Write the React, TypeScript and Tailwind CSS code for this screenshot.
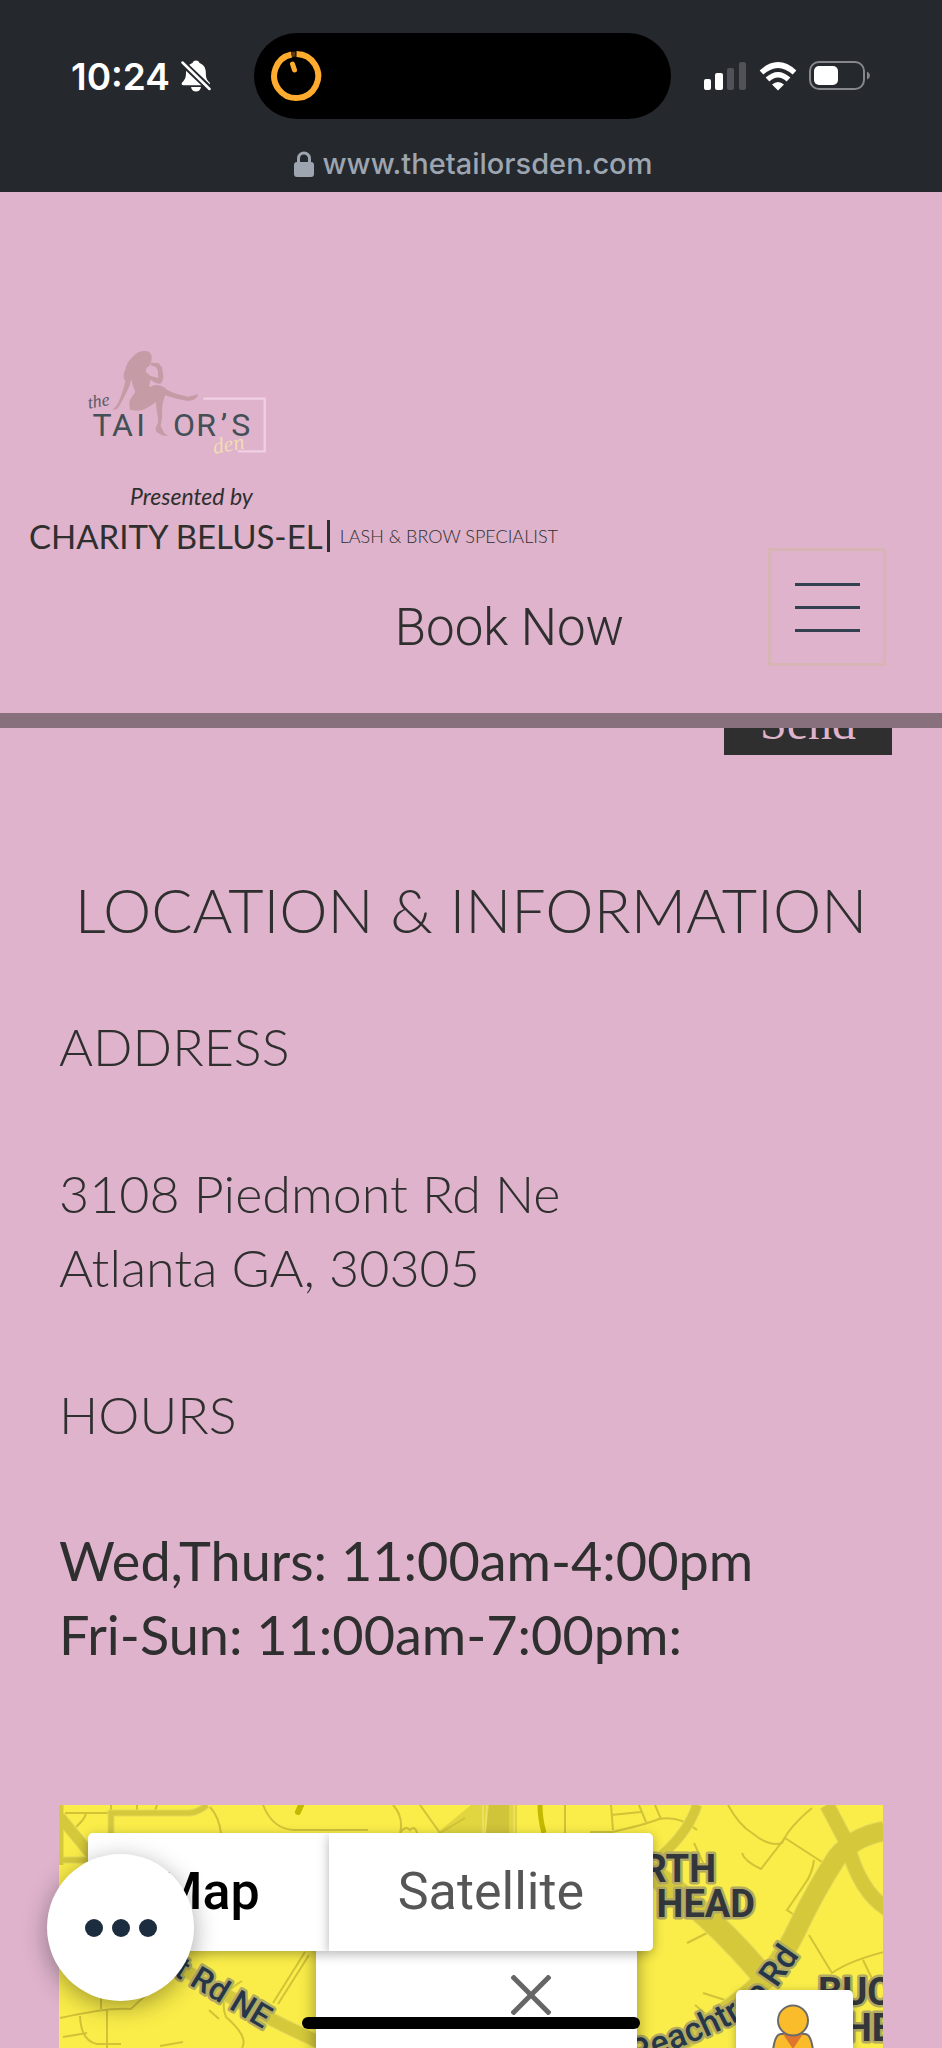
import type { ReactNode } from "react";

const ROADS_THIN = [
  "M6 8H52M27 8Q26 14 17 22M78 0V8M98 0L96 6M52 0V8",
  "M151 2Q160 12 162 28",
  "M204 0Q214 25 236 25H309",
  "M334 0Q345 12 341 28M341 28Q346 20 351 25Q356 20 358 28",
  "M361 0L381 28L406 13",
  "M506 0V28M552 0L554 25M552 10L582 7M580 0L587 17M596 0L602 14",
  "M531 27H553Q585 20 600 14Q620 10 638 25",
  "M669 0Q680 20 693 28Q710 42 723 38Q730 22 753 3",
  "M683 48Q685 56 702 64L726 33L763 57",
  "M755 55Q753 70 745 80L728 105L738 112",
  "M750 130L773 168Q790 156 825 147M804 155L816 180",
  "M628 138L650 127M635 38L645 60",
  "M214 198L246 147M219 199L250 150",
  "M183 176Q158 190 167 212Q190 232 183 243",
  "M1 213Q50 202 72 204Q86 190 98 182M21 211Q22 236 38 239H62M48 204V243M42 190V204",
  "M4 232L28 228M101 241L124 237M150 205L160 214",
  "M636 200L648 210L644 230M644 188L666 195",
];

const ROADS_WIDE: { d: string; width: number }[] = [
  { d: "M2 0V60", width: 4 },
  { d: "M52 28V8H130Q140 7 148 0", width: 5 },
  { d: "M1 12L34 52", width: 10 },
  { d: "M1 55H34", width: 5 },
  { d: "M638 0Q630 26 603 50", width: 9 },
  { d: "M121 162Q190 206 262 238", width: 12 },
  { d: "M580 60Q650 104 713 182", width: 22 },
  { d: "M825 26Q794 32 778 52Q756 86 740 120Q720 164 686 192Q650 220 600 250", width: 19 },
  { d: "M768 0L788 38Q800 86 828 104", width: 14 },
];

function StatusBar() {
  return (
    <div className="grid grid-cols-[1fr_417px_1fr] items-center pr-[17px] pt-[33px] font-[Inter,sans-serif] text-white">
      <div className="flex items-center gap-[11px] pl-[71px]">
        <span className="text-[37px] leading-none font-semibold">10:24</span>
        <svg viewBox="0 0 30 32" className="h-8 w-[30px]" aria-label="Silent mode">
          <path
            fill="#fff"
            d="M15 .5a4 4 0 0 1 3.600 2.400c4 1.500 6.200 5 6.200 9.300 0 6 1.200 7.800 3.500 10 1.300 1.500.700 3-.800 3H2.500c-1.800 0-2.500-1.600-1.200-3 2.400-2.400 3.700-4 3.700-10 0-4.300 2.300-7.800 6.400-9.300A4 4 0 0 1 15 .5zM10 27h10c-.5 3-2.500 4.500-5 4.500S10.500 30 10 27z"
          />
          <path d="M-1 .5L31 31" stroke="#25282d" strokeWidth="6.500" />
          <path d="M1.500 2.500L28.500 29" stroke="#fff" strokeWidth="2.500" strokeLinecap="round" />
        </svg>
      </div>
      <div className="flex h-[86px] items-center rounded-full bg-black pl-[16px]">
        <svg viewBox="0 0 52 52" className="size-[52px]" fill="none" stroke="#ffab2e" aria-label="Timer">
          <path d="M21.500 4.500A22 22 0 1 0 26.500 4" strokeWidth="6" />
          <path d="M25.500 4A22 22 0 0 0 21.500 4.500" stroke="#5a3b12" strokeWidth="5" />
          <path d="M22.500 14L24.500 20" strokeWidth="5" strokeLinecap="round" />
        </svg>
      </div>
      <div className="flex items-center pl-[33px]">
        <svg viewBox="0 0 42 28" className="h-7 w-[42px]" fill="#fff" aria-label="Signal">
          <rect x="0" y="17" width="7" height="11" rx="2" />
          <rect x="11" y="11" width="8" height="17" rx="2" />
          <rect x="23" y="6" width="7" height="22" rx="2" fill="#505257" />
          <rect x="35" y="0" width="7" height="28" rx="2" fill="#505257" />
        </svg>
        <svg viewBox="0 0 38 29" className="ml-[13px] h-[29px] w-[38px]" fill="none" stroke="#fff" aria-label="Wi-Fi">
          <path d="M2.500 10.500Q19-4.500 35.500 10.500" strokeWidth="5.500" />
          <path d="M8.500 17.500Q19 8 29.500 17.500" strokeWidth="5.500" />
          <path d="M13 22.500Q19 17.500 25 22.500L19 28.500z" fill="#fff" stroke="none" />
        </svg>
        <svg viewBox="0 0 62 30" className="ml-[12px] h-[30px] w-[62px]" aria-label="Battery">
          <rect x="1" y="1" width="54" height="27" rx="9" fill="none" stroke="#85878a" strokeWidth="2" />
          <rect x="5" y="5" width="24" height="19" rx="5" fill="#fff" />
          <path d="M58 10.500q3 1.500 3 4t-3 4z" fill="#85878a" />
        </svg>
      </div>
    </div>
  );
}

function Logo() {
  return (
    <svg viewBox="0 0 570 390" className="ml-[80px] h-[130px] w-[190px]" role="img" aria-label="The Tailor's Den">
      {/* seated figure, its leg stands in for the L */}
      <g fill="#c59ba5">
        <path d="M196 33C210 34 217 44 215 58L212 70C210 78 203 82 199 84L197 96C206 102 213 108 212 118L207 138C212 142 215 146 215 150L196 174L150 212L148 186C152 172 162 164 166 156L158 134L154 118C150 136 142 154 134 168C126 184 120 196 112 206L98 211L110 196C120 180 126 160 132 140L136 122C128 112 130 100 136 90C138 74 146 62 158 50C168 38 182 31 196 33Z" />
        <path d="M214 68L236 70L246 82L250 108C250 118 246 128 240 132L226 128L206 116L204 106L234 114L234 92L228 82L212 76Z" />
        <path d="M152 186C166 166 196 146 222 136C240 132 252 140 262 150C280 160 302 166 324 170L344 166L354 163L352 170L340 180L326 183C304 180 278 174 256 166C250 180 246 196 246 212C248 228 244 244 242 258L252 278L264 288L246 286L230 276L226 266L234 248C236 230 228 212 228 186C214 196 200 206 184 211C168 214 154 212 150 204Z" />
      </g>
      <path d="M370 176H554V334H474" fill="none" stroke="#f1cfe4" strokeWidth="7" />
      <g fill="#454f56" fontFamily="Roboto, sans-serif" fontSize="96" textAnchor="middle">
        <text x="66" y="288">T</text>
        <text x="127" y="288">A</text>
        <text x="182" y="288">I</text>
        <text x="312" y="288">O</text>
        <text x="378" y="288">R</text>
        <text x="432" y="288">’</text>
        <text x="482" y="288">S</text>
      </g>
      <g fontFamily="'Liberation Serif', serif" fontStyle="italic">
        <text x="26" y="206" fill="#5d5a66" fontSize="54" transform="rotate(-10 26 206)">the</text>
        <text x="402" y="342" fill="#f2dcb4" fontSize="66" transform="rotate(-10 402 342)">den</text>
      </g>
    </svg>
  );
}

function SiteHeader() {
  return (
    <header className="flex items-end justify-between border-b-[15px] border-[#88717d] pr-[56px] pb-[47px] pt-[148px] text-[#2f2f2f]">
      <div className="flex flex-1 flex-col">
        <Logo />
        <p className="mt-[10px] pl-[130px] text-[23px] leading-[32px] italic">Presented by</p>
        <div className="mt-1 flex items-center pl-[29px] leading-[40px]">
          <h1 className="text-[33px]">CHARITY BELUS-EL</h1>
          <span className="ml-1 h-8 w-[3px] bg-[#2f2f2f]" />
          <span className="ml-[10px] text-[18px] font-light">LASH &amp; BROW SPECIALIST</span>
        </div>
        <a
          href="#book"
          className="mt-[34px] mr-[144px] self-end font-[Roboto,sans-serif] text-[51px] leading-[76px] font-light"
        >
          Book Now
        </a>
      </div>
      <button
        type="button"
        aria-label="Open menu"
        className="flex h-[118px] w-[118px] flex-col items-center justify-center gap-[20px] border-[3px] border-[#d8b5b5]"
      >
        <span className="h-[3px] w-[65px] bg-[#32404f]" />
        <span className="h-[3px] w-[65px] bg-[#32404f]" />
        <span className="h-[3px] w-[65px] bg-[#32404f]" />
      </button>
    </header>
  );
}

function Block({ children }: { children: ReactNode }) {
  return <p className="text-[52px] font-light">{children}</p>;
}

function LocationInfo() {
  return (
    <section className="px-[59px] text-[#2f2f2f]">
      <h2 className="pt-[110px] text-center text-[61px] leading-[90px] font-light whitespace-nowrap">
        LOCATION &amp; INFORMATION
      </h2>
      <div className="mt-[54px] flex flex-col gap-[73px] leading-[74px]">
        <Block>ADDRESS</Block>
        <Block>
          3108 Piedmont Rd Ne
          <br />
          Atlanta GA, 30305
        </Block>
        <Block>HOURS</Block>
        <p className="text-[54px]">
          Wed,Thurs: 11:00am-4:00pm
          <br />
          Fri-Sun: 11:00am-7:00pm:
        </p>
      </div>
    </section>
  );
}

function MapCanvas() {
  return (
    <svg viewBox="0 0 825 243" preserveAspectRatio="xMinYMin slice" className="absolute inset-0 size-full">
      <rect width="825" height="243" fill="#faed49" />
      <path d="M378 28L412 0H458V28z" fill="#e1d640" />
      <path d="M430 0H450V28H427z" fill="#d0c43a" />
      <path d="M424 0V28M428 0L426 28M455 0V28" stroke="#eee36a" strokeWidth="1.500" />
      <g fill="none" stroke="#d0c338" strokeWidth="2">
        {ROADS_THIN.map((d) => (
          <path key={d} d={d} />
        ))}
      </g>
      <g fill="none" stroke="#e4d95c">
        {ROADS_WIDE.map((r) => (
          <path key={r.d} d={r.d} strokeWidth={r.width + 2} />
        ))}
      </g>
      <g fill="none" stroke="#d5c93b">
        {ROADS_WIDE.map((r) => (
          <path key={r.d} d={r.d} strokeWidth={r.width} />
        ))}
      </g>
      <g fill="none" stroke="#c5b800">
        <path d="M243 -2L239 7" strokeWidth="6" strokeLinecap="round" />
        <path d="M481 0Q481 14 485 28" strokeWidth="5" />
      </g>
      <g
        fontFamily="Roboto, sans-serif"
        fontWeight="500"
        fill="#26374a"
        stroke="#b3ab62"
        strokeWidth="5"
        strokeLinejoin="round"
        paintOrder="stroke"
      >
        <text x="204" y="224" fontSize="32" textAnchor="end" transform="rotate(31 204 224)">
          t Rd NE
        </text>
        <path id="peachtree" d="M576 260C620 240 686 226 720 180L756 128" fill="none" stroke="none" />
        <text fontSize="34">
          <textPath href="#peachtree">Peachtree Rd</textPath>
        </text>
        <g fontSize="38" fontWeight="700" fill="#33363a">
          <text x="657" y="77" textAnchor="end">RTH</text>
          <text x="696" y="112" textAnchor="end">HEAD</text>
          <text x="759" y="200">BUC</text>
          <text x="786" y="236">HE</text>
        </g>
      </g>
    </svg>
  );
}

function MapPanel() {
  return (
    <section className="relative mx-[59px] mt-[133px] min-h-[243px] flex-1 overflow-hidden font-[Roboto,sans-serif]">
      <MapCanvas />
      <div className="absolute top-[120px] left-[257px] h-[200px] w-[321px] bg-white shadow-[0_4px_16px_rgba(0,0,0,0.4)]">
        <button type="button" aria-label="Close" className="absolute top-[50px] right-[86px]">
          <svg viewBox="0 0 40 40" className="size-10" stroke="#666" strokeWidth="5">
            <path d="M1 1L39 39M39 1L1 39" />
          </svg>
        </button>
      </div>
      <div className="absolute top-[28px] left-[29px] flex text-[52px] leading-[118px]">
        <button type="button" className="rounded-l-[5px] bg-white px-[69px] font-medium text-black shadow-[0_3px_12px_rgba(0,0,0,0.3)]">
          Map
        </button>
        <button type="button" className="rounded-r-[5px] bg-white px-[69px] text-[#565656] shadow-[0_3px_12px_rgba(0,0,0,0.3)]">
          Satellite
        </button>
      </div>
      <button
        type="button"
        aria-label="Street View"
        className="absolute top-[185px] right-[30px] flex h-[118px] w-[117px] justify-center rounded-[5px] bg-white pt-[14px] pr-1 shadow-[0_2px_8px_rgba(0,0,0,0.3)]"
      >
        <svg viewBox="0 0 44 90" className="h-[90px] w-11" stroke="#6b6b6b" strokeWidth="2">
          <path d="M10 30H34Q40 30 42 46V70H2V46Q4 30 10 30z" fill="#fbbc2c" />
          <path d="M12 30H32L22 45z" fill="#e0762d" stroke="none" />
          <circle cx="22" cy="16.500" r="15" fill="#fbbc2c" />
        </svg>
      </button>
    </section>
  );
}

export default function App() {
  return (
    <div className="relative flex h-screen flex-col overflow-hidden bg-[#deb3cb] font-[Lato,sans-serif]">
      <div className="h-[192px] shrink-0 bg-[#25282d]">
        <StatusBar />
        <div className="mt-[24px] flex items-center justify-center gap-[9px] pl-1 font-[Inter,sans-serif] text-[#9da5b1]">
          <svg viewBox="0 0 20 26" className="h-[26px] w-5" aria-hidden="true">
            <rect x="0" y="11" width="20" height="15" rx="3" fill="currentColor" />
            <path d="M4.500 12V7.500a5.500 5.500 0 0 1 11 0V12" fill="none" stroke="currentColor" strokeWidth="3" />
          </svg>
          <span className="text-[29px] leading-[42px] font-medium">www.thetailorsden.com</span>
        </div>
      </div>

      <SiteHeader />

      <main className="flex flex-1 flex-col">
        <div className="flex h-[27px] shrink-0 items-end justify-end overflow-hidden pr-[50px]">
          <button
            type="button"
            className="h-[65px] w-[168px] shrink-0 bg-[#2f2f2f] font-['Liberation_Serif',serif] text-[48px] leading-[65px] text-[#deb3cb]"
          >
            Send
          </button>
        </div>
        <LocationInfo />
        <MapPanel />
      </main>

      {/* floating chat button */}
      <button
        type="button"
        aria-label="Open chat"
        className="absolute bottom-[47px] left-[47px] flex size-[147px] items-center justify-center gap-[9px] rounded-full bg-white shadow-[0_6px_24px_rgba(0,0,0,0.35)]"
      >
        <span className="size-[18px] rounded-full bg-[#1b2d3f]" />
        <span className="size-[18px] rounded-full bg-[#1b2d3f]" />
        <span className="size-[18px] rounded-full bg-[#1b2d3f]" />
      </button>
      <div className="absolute bottom-[19px] left-1/2 h-3 w-[338px] -translate-x-1/2 rounded-full bg-black" />
    </div>
  );
}
